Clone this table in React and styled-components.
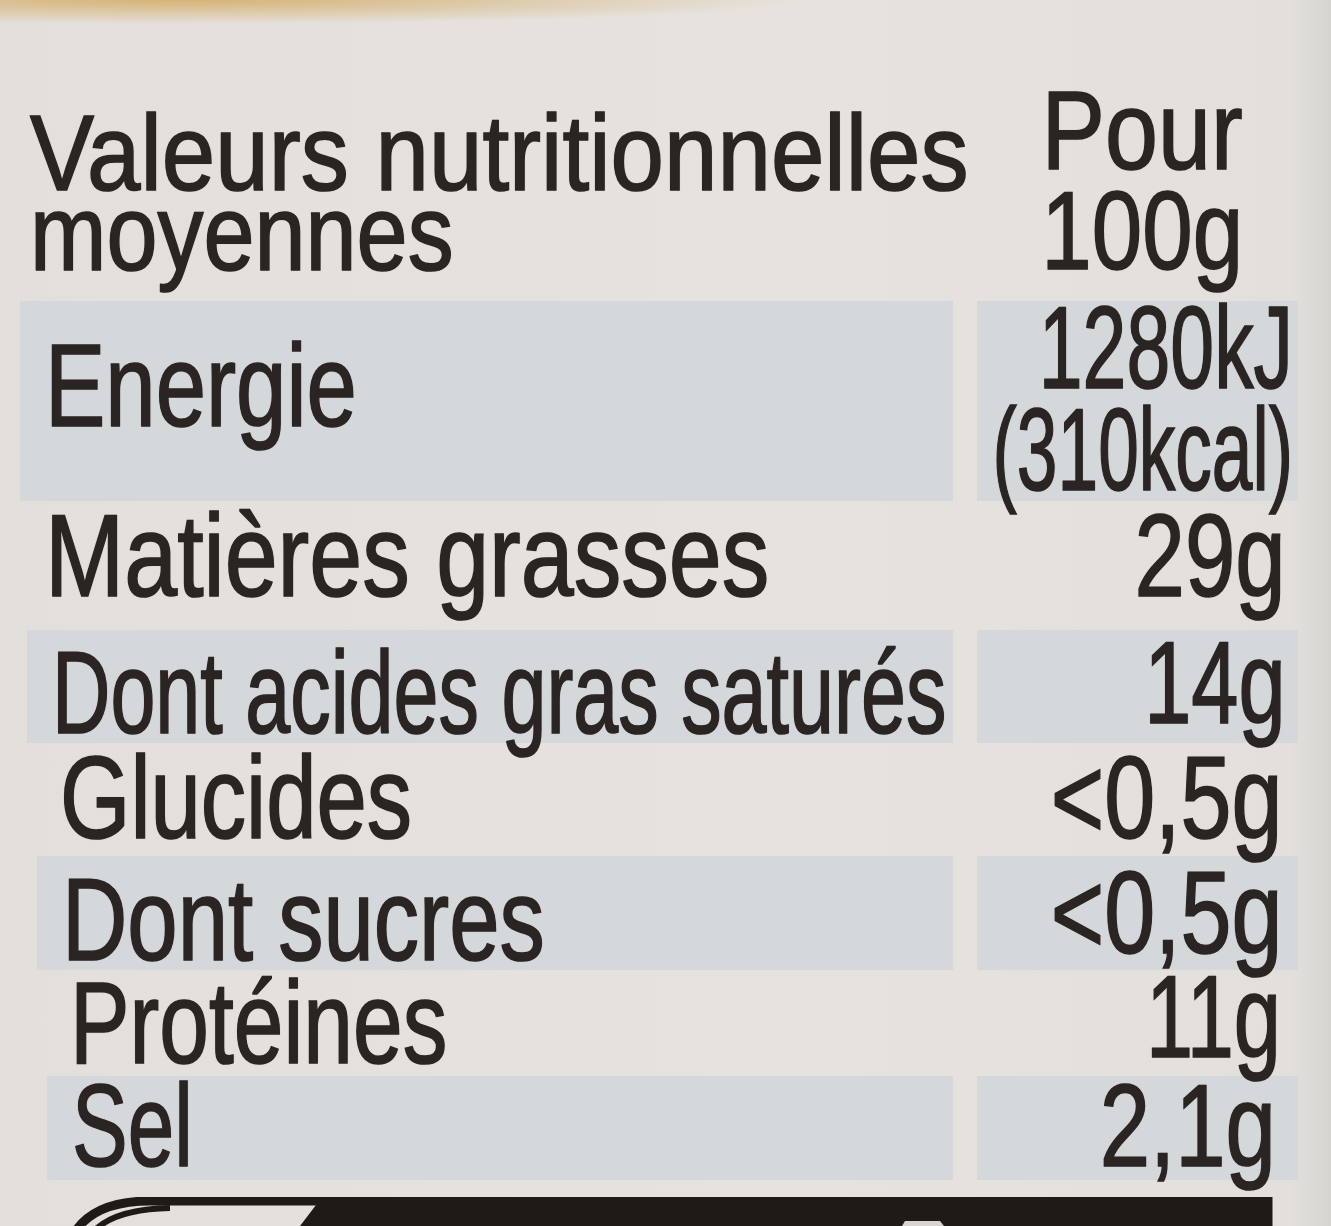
import React from "react";
import styled, { createGlobalStyle } from "styled-components";

const GlobalStyle = createGlobalStyle`
  html, body {
    margin: 0;
    padding: 0;
    height: 1226px;
    overflow: hidden;
  }
  body {
    font-family: "Liberation Sans", Arial, sans-serif;
    color: #2a2522;
    background:
      radial-gradient(ellipse 620px 24px at 180px 0, rgba(214, 176, 112, 0.95), rgba(214, 176, 112, 0) 100%),
      linear-gradient(to right, #e3dfda 0, #e6e2dd 60%, #e3e0dc 97%, #d6d4d1 100%);
  }
`;

const Label = styled.section`
  width: 1331px;
`;

const Header = styled.header`
  height: 301px;
  display: grid;
  grid-template-columns: minmax(0, 1fr) auto;
`;

const HeadLeft = styled.div`
  min-width: 0;
  padding: 113px 0 0 30px;
  font-size: 108px;
  line-height: 80px;
  display: flex;
  flex-direction: column;
  align-items: flex-start;
`;

const HeadRight = styled.div`
  width: 210px;
  padding: 81px 88px 0 0;
  font-size: 112px;
  line-height: 100px;
  display: flex;
  flex-direction: column;
  align-items: flex-end;
`;

const Text = styled.span`
  display: block;
  width: max-content;
  white-space: nowrap;
  transform: scaleX(${(p) => p.$sx});
  transform-origin: ${(p) => (p.$end ? "right" : "left")} center;
  -webkit-text-stroke: 1.6px #2a2522;
  text-shadow: 0 0 1.5px rgba(30, 25, 22, 0.45);
`;

const Rows = styled.div`
  display: flex;
  flex-direction: column;
`;

const Row = styled.div`
  height: ${(p) => p.$h}px;
  margin: 0 33px 0 ${(p) => p.$ml}px;
  display: grid;
  grid-template-columns: minmax(0, 1fr) 321px;
  column-gap: 24px;
  font-size: 116px;
  line-height: 100px;
`;

const Cell = styled.div`
  min-width: 0;
  background: ${(p) => (p.$shade ? "#d4d8db" : "transparent")};
  display: flex;
  flex-direction: column;
`;

const LabelCell = styled(Cell)`
  align-items: flex-start;
  padding: ${(p) => p.$pad}px 0 0 25px;
`;

const ValueCell = styled(Cell)`
  align-items: flex-end;
  padding-right: ${(p) => p.$pr}px;
`;

const ValueStack = styled.div`
  margin-top: ${(p) => p.$top}px;
  line-height: ${(p) => p.$lh}px;
  display: flex;
  flex-direction: column;
  align-items: flex-end;
`;

const Footer = styled.div`
  margin-top: 17px;
  height: 29px;
  svg {
    display: block;
  }
`;

const rows = [
  { label: "Energie", ls: 0.78, values: [["1280kJ", 0.68], ["(310kcal)", 0.63]], h: 192, ml: 20, pad: 35, vtop: -4, vlh: 102, pr: 5, shade: true },
  { label: "Matières grasses", ls: 0.82, values: [["29g", 0.78]], h: 137, ml: 20, pad: 13, vtop: 13, pr: 12 },
  { label: "Dont acides gras saturés", ls: 0.697, values: [["14g", 0.73]], h: 111, ml: 27, pad: 13, vtop: 3, pr: 12, shade: true },
  { label: "Glucides", ls: 0.78, values: [["<0,5g", 0.79]], h: 115, ml: 35, pad: 7, vtop: 7, pr: 15 },
  { label: "Dont sucres", ls: 0.78, values: [["<0,5g", 0.79]], h: 111, ml: 37, pad: 14, vtop: 7, pr: 15, shade: true },
  { label: "Protéines", ls: 0.77, values: [["11g", 0.73]], h: 109, ml: 45, pad: 6, vtop: 0, pr: 17 },
  { label: "Sel", ls: 0.72, values: [["2,1g", 0.78]], h: 104, ml: 47, pad: 0, vtop: 0, pr: 22, shade: true },
];

const RecycleBox = () => (
  <svg width="1331" height="29" viewBox="0 0 1331 29">
    <path d="M77 32 Q98 4 150 4 L1268 4 L1268 32" fill="none" stroke="#1e1a18" strokeWidth="9" />
    <path d="M96 32 Q118 12 170 11" fill="none" stroke="#1e1a18" strokeWidth="6" />
    <path d="M316 8 L1268 8 L1268 29 L300 29 Z" fill="#1e1a18" />
    <path d="M905 24 L940 24 L944 29 L902 29 Z" fill="#d8d4cf" />
  </svg>
);

export default function App() {
  return (
    <>
      <GlobalStyle />
      <Label>
        <Header>
          <HeadLeft>
            <Text $sx={0.89}>Valeurs nutritionnelles</Text>
            <Text $sx={0.85}>moyennes</Text>
          </HeadLeft>
          <HeadRight>
            <Text $sx={0.85} $end>Pour</Text>
            <Text $sx={0.81} $end>100g</Text>
          </HeadRight>
        </Header>
        <Rows>
          {rows.map((r) => (
            <Row key={r.label} $h={r.h} $ml={r.ml}>
              <LabelCell $shade={r.shade} $pad={r.pad}>
                <Text $sx={r.ls}>{r.label}</Text>
              </LabelCell>
              <ValueCell $shade={r.shade} $pr={r.pr}>
                <ValueStack $top={r.vtop} $lh={r.vlh || 100}>
                  {r.values.map(([v, sx]) => (
                    <Text key={v} $sx={sx} $end>
                      {v}
                    </Text>
                  ))}
                </ValueStack>
              </ValueCell>
            </Row>
          ))}
        </Rows>
        <Footer>
          <RecycleBox />
        </Footer>
      </Label>
    </>
  );
}
